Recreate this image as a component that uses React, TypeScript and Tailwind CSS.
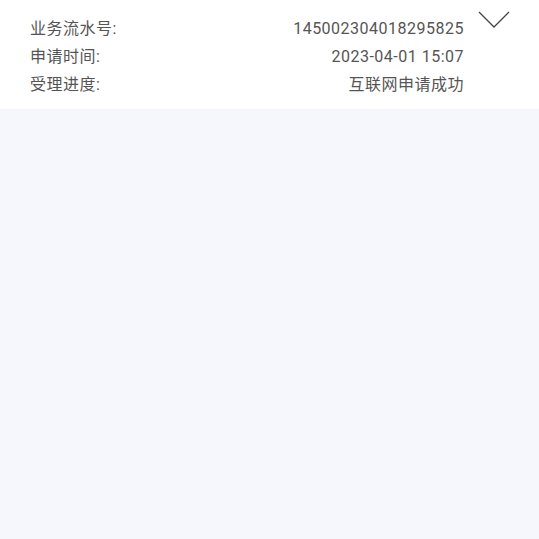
import React from "react";

const rows: [string, string][] = [
  ["业务流水号:", "145002304018295825"],
  ["申请时间:", "2023-04-01 15:07"],
  ["受理进度:", "互联网申请成功"],
];

export default function App() {
  return (
    <div
      className="w-[539px] h-[539px] bg-[#f6f7fc] overflow-hidden"
      style={{ fontFamily: 'Roboto, "Noto Sans CJK SC", sans-serif' }}
    >
      <div className="bg-white h-[109px] flex pl-[30px] pt-[15px]">
        <div className="w-[434px] flex flex-col">
          {rows.map(([k, v]) => (
            <div key={k} className="flex justify-between h-[28px] items-center text-[16px] tracking-[0.5px] text-[#555555]">
              <span>{k}</span>
              <span>{v}</span>
            </div>
          ))}
        </div>
        <svg width="32" height="20" viewBox="0 0 32 20" className="ml-[14px] -mt-[4px]" fill="none">
          <polyline points="1,1 16,16 31,1" stroke="#444" strokeWidth="1.3" />
        </svg>
      </div>
    </div>
  );
}
